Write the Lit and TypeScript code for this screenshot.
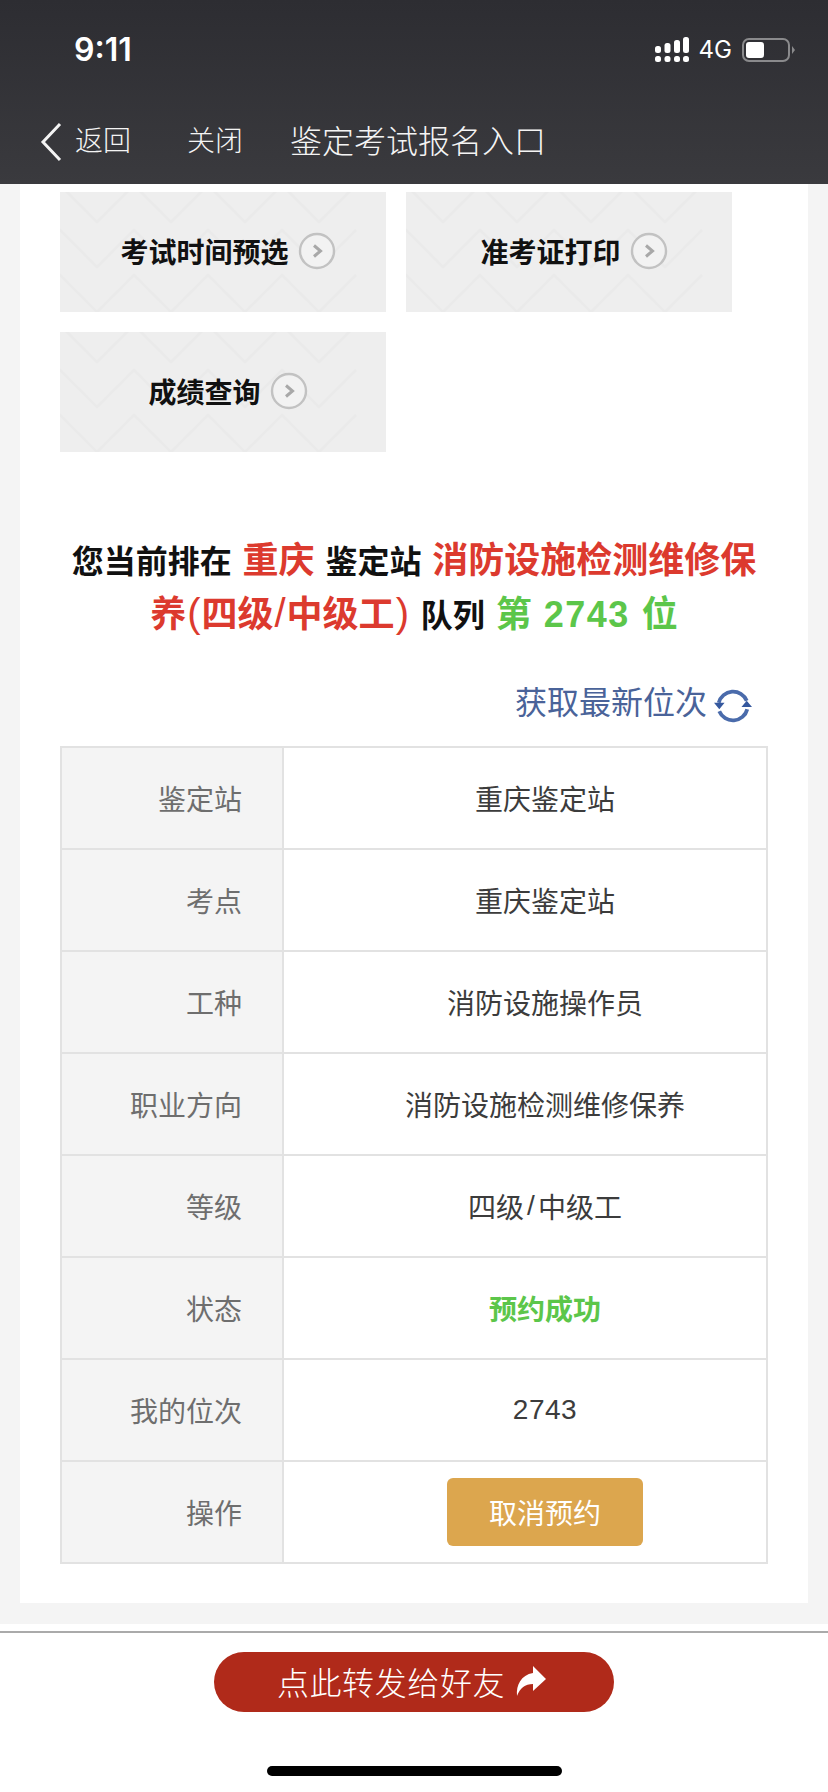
import { LitElement, html, css, unsafeCSS } from "lit";
import { customElement } from "lit/decorators.js";

const zigRow = (y: number) => {
  const pts: string[] = [];
  for (let i = 0; i <= 9; i++) {
    const x = -37 + i * 37;
    pts.push(`${x} ${i % 2 === 0 ? y + 37 : y}`);
  }
  return `<path d="M${pts.join("L")}"/>`;
};
const zig = encodeURIComponent(
  `<svg xmlns="http://www.w3.org/2000/svg" width="326" height="120"><g fill="none" stroke="#eaeaea" stroke-width="2.5">${zigRow(-7)}${zigRow(38)}${zigRow(83)}</g></svg>`
);

const slashed = (v: string) => {
  const parts = v.split("/");
  return parts.length === 2 ? html`${parts[0]}<span class="sl">/</span>${parts[1]}` : v;
};

const rows: [string, string, string?][] = [
  ["鉴定站", "重庆鉴定站"],
  ["考点", "重庆鉴定站"],
  ["工种", "消防设施操作员"],
  ["职业方向", "消防设施检测维修保养"],
  ["等级", "四级/中级工"],
  ["状态", "预约成功", "ok"],
  ["我的位次", "2743", "num"],
];

@customElement("app-root")
export class AppRoot extends LitElement {
  static styles = css`
    :host {
      display: block;
      width: 828px;
      height: 1792px;
      overflow: hidden;
      background: #f4f4f4;
      font-family: "Liberation Sans", "Noto Sans CJK SC", sans-serif;
    }
    .head {
      height: 184px;
      background: linear-gradient(#2d2d32, #3a3a3e);
      color: #fff;
      box-sizing: border-box;
      display: flex;
      flex-direction: column;
    }
    .status {
      height: 100px;
      display: flex;
      align-items: center;
      padding: 0 32px 0 74px;
      justify-content: space-between;
    }
    .time {
      font: 600 32px/1 Inter, "Liberation Sans", sans-serif;
    }
    .sright {
      display: flex;
      align-items: center;
      gap: 10px;
      font: 400 24px/1 Inter, "Liberation Sans", sans-serif;
    }
    .nav {
      display: flex;
      align-items: center;
      height: 84px;
      padding: 0 0 7px 40px;
      box-sizing: border-box;
      font-size: 28px;
      font-weight: 300;
      color: #f4f4f4;
    }
    .nav svg {
      margin-top: 7px;
    }
    .nav .back {
      margin-left: 13px;
    }
    .nav .close {
      margin-left: 56px;
    }
    .nav .title {
      margin-left: 47px;
      font-size: 32px;
    }
    .card {
      margin: 0 20px;
      height: 1419px;
      background: #fff;
      box-sizing: border-box;
      padding: 8px 40px 0;
    }
    .btns {
      display: flex;
      flex-wrap: wrap;
      gap: 20px;
      height: 260px;
      align-content: flex-start;
    }
    .tile {
      width: 326px;
      height: 120px;
      box-sizing: border-box;
      padding: 0 0 2px 10px;
      background-color: #eeeeee;
      background-image: url("data:image/svg+xml,${unsafeCSS(zig)}");
      display: flex;
      align-items: center;
      justify-content: center;
      gap: 9px;
      font-size: 28px;
      font-weight: 700;
      color: #111;
    }
    .headline {
      padding-top: 83px;
      text-align: center;
      font-weight: 700;
      font-size: 32px;
      line-height: 54px;
      color: #111;
      word-spacing: 2px;
    }
    .red,
    .grn {
      font-size: 36px;
      line-height: 1;
    }
    .red {
      color: #dc3a2e;
    }
    .grn {
      color: #5cc64a;
    }
    .lat {
      font-size: 40px;
      line-height: 1;
      font-weight: 400;
      margin: 0 1px;
    }
    .digits {
      letter-spacing: 1.5px;
    }
    .refresh {
      display: flex;
      justify-content: flex-end;
      align-items: center;
      gap: 7px;
      margin-top: 27px;
      height: 60px;
      padding-right: 16px;
      font-size: 32px;
      color: #4a6399;
    }
    .refresh svg {
      margin-top: 12px;
    }
    .table {
      margin-top: 16px;
      width: 708px;
      border-top: 2px solid #e2e2e2;
      border-left: 2px solid #e2e2e2;
      display: grid;
      grid-template-columns: 222px 484px;
      grid-auto-rows: 102px;
      box-sizing: border-box;
    }
    .lbl,
    .val {
      border-right: 2px solid #e2e2e2;
      border-bottom: 2px solid #e2e2e2;
      font-size: 28px;
      display: flex;
      align-items: center;
      box-sizing: border-box;
    }
    .lbl {
      background: #f4f4f4;
      color: #6e6e6e;
      justify-content: flex-end;
      padding-right: 40px;
    }
    .val {
      background: #fff;
      color: #3c3c3c;
      justify-content: center;
      padding-left: 40px;
    }
    .val.ok {
      color: #5cc64a;
      font-weight: 700;
    }
    .val.num {
      letter-spacing: 0.5px;
    }
    .sl {
      margin: 0 3px;
    }
    .cancel {
      width: 196px;
      height: 68px;
      border-radius: 6px;
      background: #dca64e;
      color: #fff;
      display: flex;
      align-items: center;
      justify-content: center;
      font-size: 28px;
    }
    .foot {
      margin-top: 21px;
      height: 168px;
      background: #fff;
      box-sizing: border-box;
      padding-top: 7px;
    }
    .rule {
      height: 2px;
      background: #aaaaaa;
    }
    .share {
      margin: 19px auto 0;
      width: 400px;
      height: 60px;
      box-sizing: border-box;
      padding: 0 4px 3px 0;
      border-radius: 30px;
      background: #b02a1a;
      color: #fff;
      font-size: 32px;
      display: flex;
      align-items: center;
      justify-content: center;
      gap: 10px;
      letter-spacing: 0.6px;
      font-weight: 300;
    }
    .bar {
      margin: 54px auto 0;
      width: 295px;
      height: 10px;
      border-radius: 5px;
      background: #000;
    }
  `;

  circle() {
    return html`<svg width="38" height="38" viewBox="0 0 38 38">
      <circle cx="19" cy="19" r="17" fill="#f2f2f2" stroke="#c2c2c2" stroke-width="2.4" />
      <path d="M16 13.5l6.5 5.5-6.5 5.5" fill="none" stroke="#a8a8a8" stroke-width="3" />
    </svg>`;
  }

  render() {
    return html`
      <div class="head">
        <div class="status">
          <span class="time">9:11</span>
          <div class="sright">
            <svg width="34" height="26" viewBox="0 0 34 26" fill="#fff">
              <rect x="0" y="9" width="6" height="7" rx="2.5" />
              <rect x="9.5" y="6" width="6" height="10" rx="2.5" />
              <rect x="19" y="3" width="6" height="13" rx="2.5" />
              <rect x="28" y="0" width="6" height="16" rx="2.5" />
              <rect x="0" y="19" width="6" height="6" rx="2.5" />
              <rect x="9.5" y="19" width="6" height="6" rx="2.5" />
              <rect x="19" y="19" width="6" height="6" rx="2.5" />
              <rect x="28" y="19" width="6" height="6" rx="2.5" />
            </svg>
            <span>4G</span>
            <svg width="54" height="24" viewBox="0 0 54 24">
              <rect x="1" y="1" width="46" height="22" rx="6" fill="none" stroke="#8a8a8c" stroke-width="2" />
              <rect x="4" y="4" width="18" height="16" rx="3" fill="#fff" />
              <path d="M50 8l3 4-3 4z" fill="#8a8a8c" />
            </svg>
          </div>
        </div>
        <div class="nav">
          <svg width="22" height="40" viewBox="0 0 22 40">
            <path d="M20 2L3 20l17 18" fill="none" stroke="#f4f4f4" stroke-width="3" />
          </svg>
          <span class="back">返回</span>
          <span class="close">关闭</span>
          <span class="title">鉴定考试报名入口</span>
        </div>
      </div>
      <div class="card">
        <div class="btns">
          <div class="tile">考试时间预选 ${this.circle()}</div>
          <div class="tile">准考证打印 ${this.circle()}</div>
          <div class="tile">成绩查询 ${this.circle()}</div>
        </div>
        <div class="headline">
          您当前排在 <span class="red">重庆</span> 鉴定站
          <span class="red">消防设施检测维修保养<span class="lat">(</span>四级<span class="lat">/</span>中级工<span class="lat">)</span></span> 队列
          <span class="grn">第 <span class="digits">2743</span> 位</span>
        </div>
        <div class="refresh">
          <span>获取最新位次</span>
          <svg width="38" height="38" viewBox="0 0 36 36">
            <g fill="none" stroke="#4a6bab" stroke-width="3.6">
              <path d="M4.5 15A14 14 0 0 1 31 13" />
              <path d="M31.5 21A14 14 0 0 1 5 23" />
            </g>
            <path d="M0 15h10l-5 6zM26 19h10l-5-6z" fill="#35589e" />
          </svg>
        </div>
        <div class="table">
          ${rows.map(
            ([k, v, c]) => html`<div class="lbl">${k}</div>
              <div class="val ${c ?? ""}">${slashed(v)}</div>`
          )}
          <div class="lbl">操作</div>
          <div class="val"><div class="cancel">取消预约</div></div>
        </div>
      </div>
      <div class="foot">
        <div class="rule"></div>
        <div class="share">
          <span>点此转发给好友</span>
          <svg width="32" height="32" viewBox="0 0 32 32">
            <path d="M18 1l13 13-13 12v-7C10 19 5 23 2 31 1 20 6 10 18 8z" fill="#fff" />
          </svg>
        </div>
        <div class="bar"></div>
      </div>
    `;
  }
}
